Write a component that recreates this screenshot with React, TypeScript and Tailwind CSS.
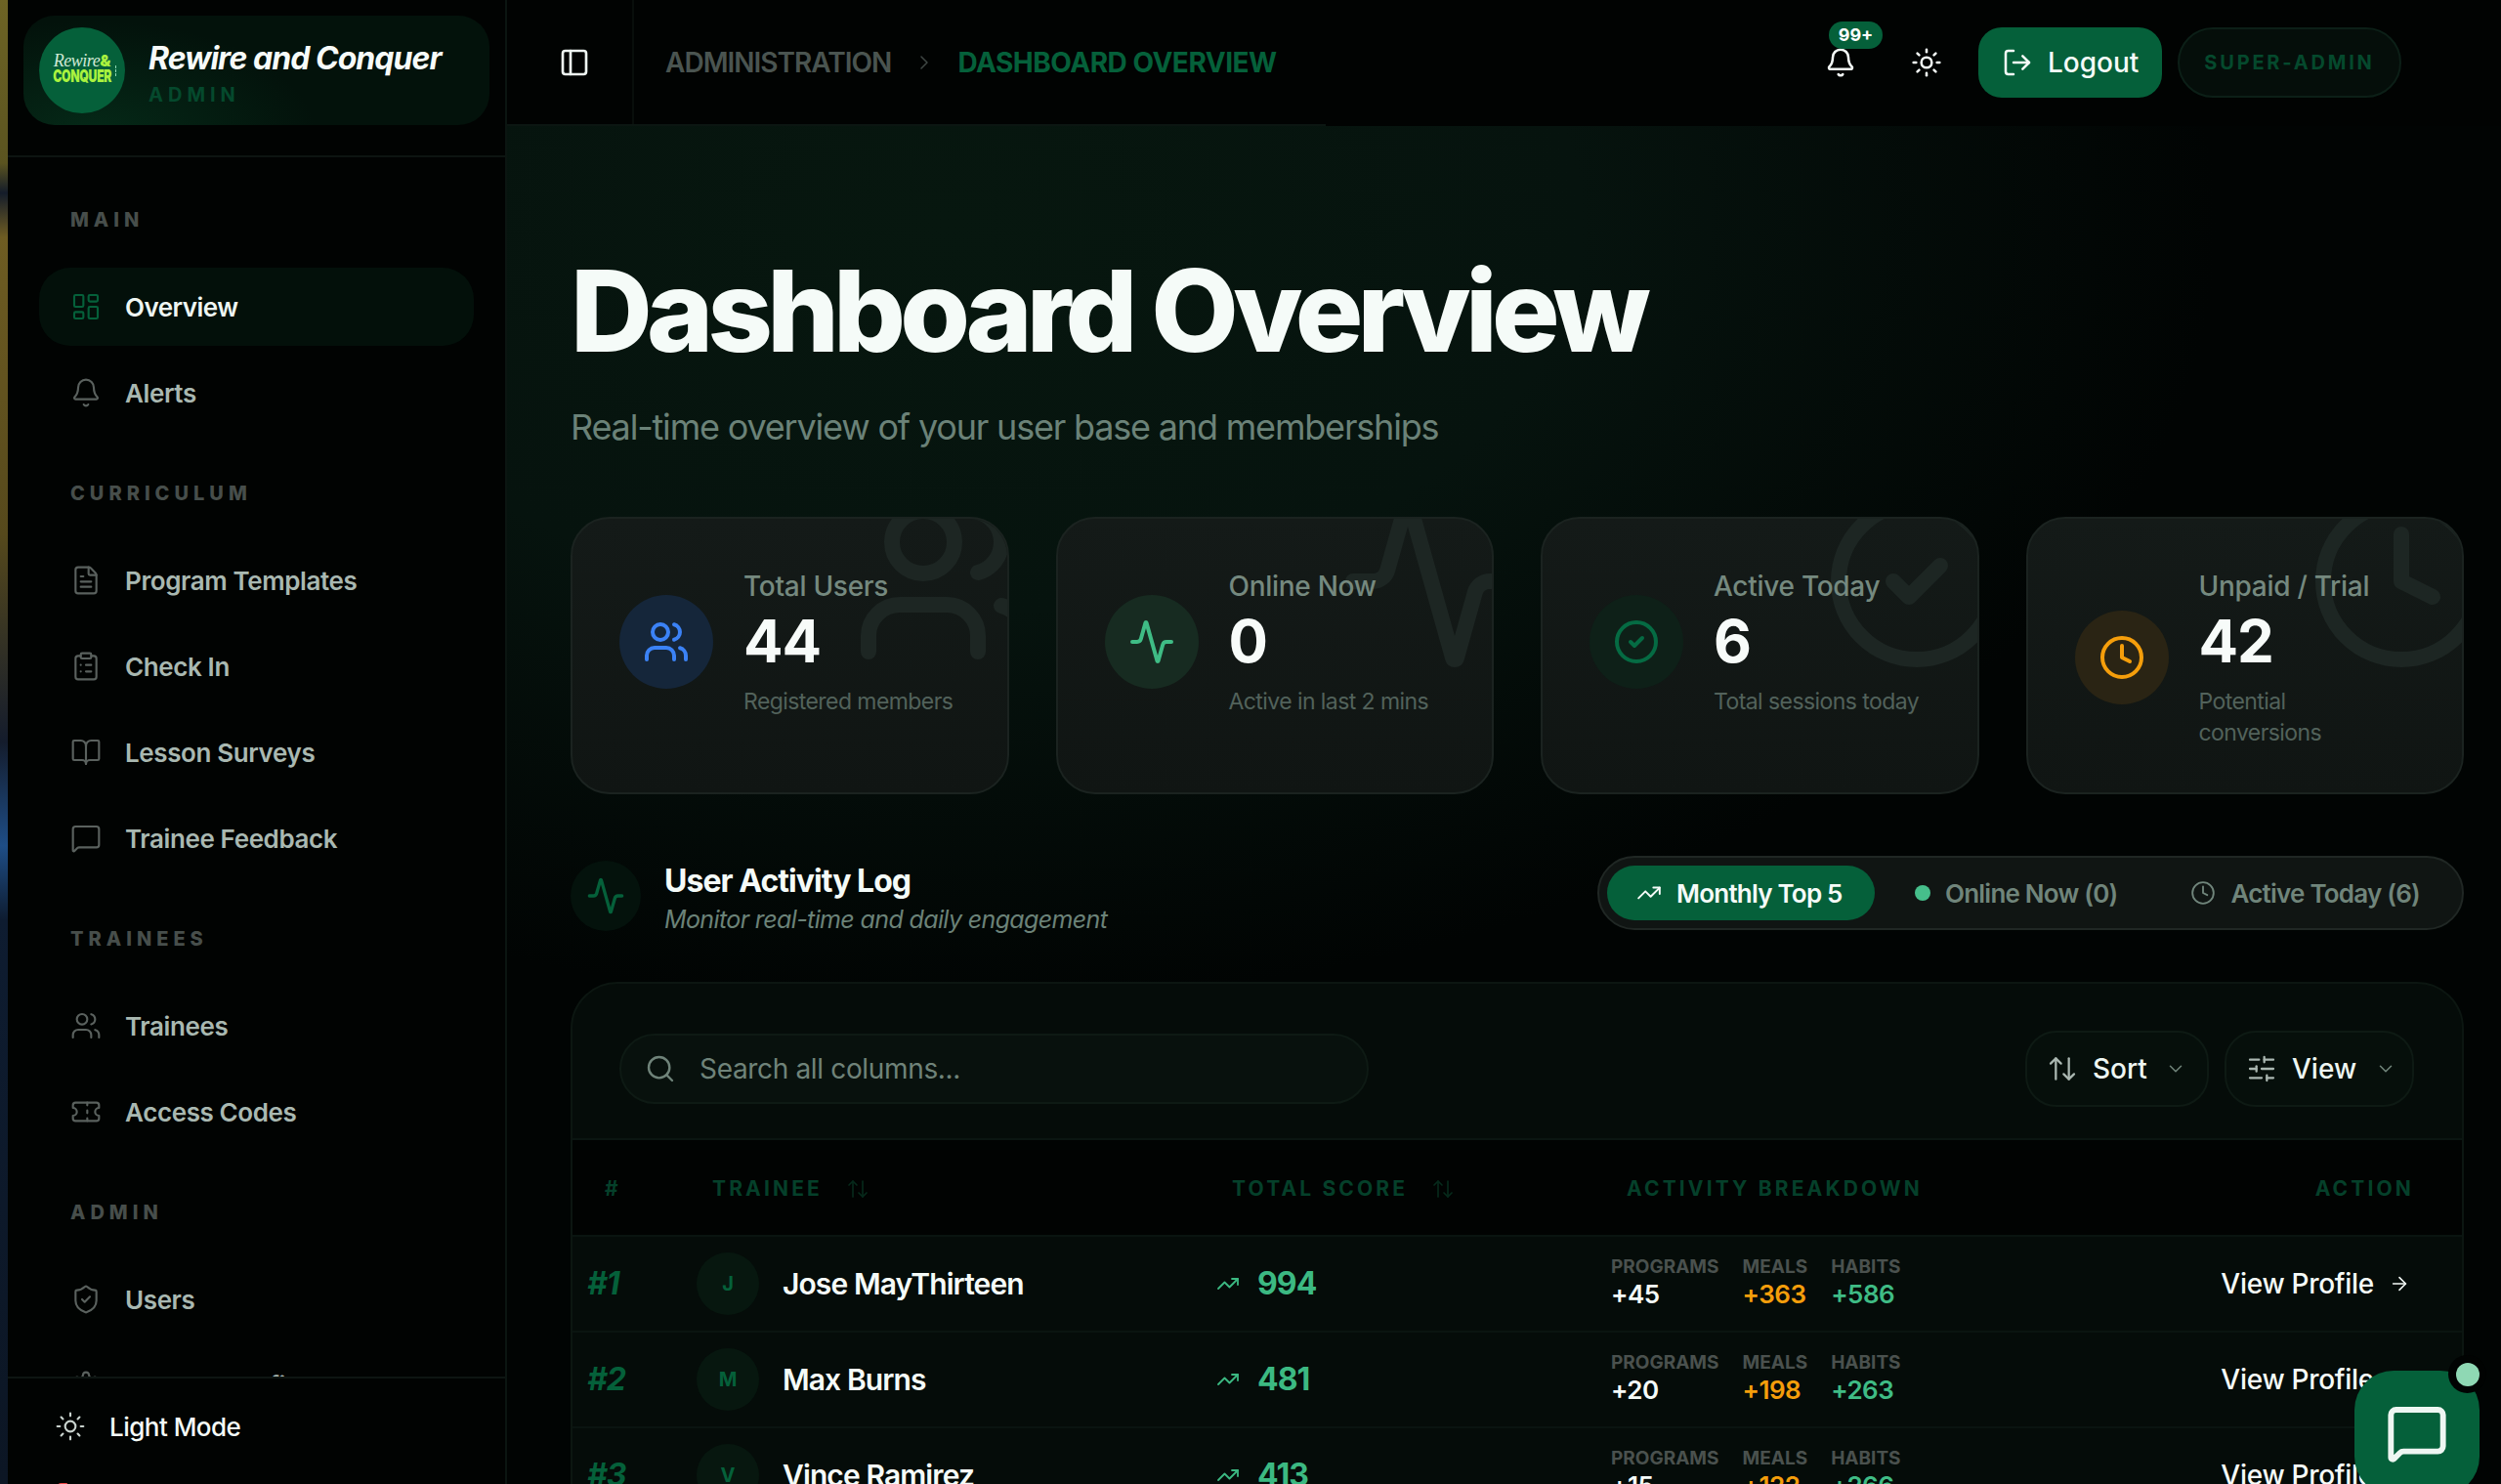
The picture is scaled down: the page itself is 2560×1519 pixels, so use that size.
import React from 'react';
import {
  Activity,
  ArrowRight,
  ArrowUpDown,
  Bell,
  BookOpen,
  ChevronDown,
  ChevronRight,
  CircleCheck,
  ClipboardList,
  Clock,
  FileText,
  LayoutDashboard,
  LogOut,
  MessageSquare,
  PanelLeft,
  Search,
  Settings,
  ShieldCheck,
  SlidersHorizontal,
  Sun,
  Ticket,
  TrendingUp,
  Users,
} from 'lucide-react';

const navSections = [
  {
    title: 'MAIN',
    items: [
      { label: 'Overview', icon: LayoutDashboard, active: true },
      { label: 'Alerts', icon: Bell },
    ],
  },
  {
    title: 'CURRICULUM',
    items: [
      { label: 'Program Templates', icon: FileText },
      { label: 'Check In', icon: ClipboardList },
      { label: 'Lesson Surveys', icon: BookOpen },
      { label: 'Trainee Feedback', icon: MessageSquare },
    ],
  },
  {
    title: 'TRAINEES',
    items: [
      { label: 'Trainees', icon: Users },
      { label: 'Access Codes', icon: Ticket },
    ],
  },
  {
    title: 'ADMIN',
    items: [
      { label: 'Users', icon: ShieldCheck },
      { label: 'System Config', icon: Settings },
    ],
  },
];

const stats = [
  {
    title: 'Total Users',
    value: '44',
    note: 'Registered members',
    icon: Users,
    circle: 'bg-[#15263a]',
    tint: 'text-[#3b82f6]',
  },
  {
    title: 'Online Now',
    value: '0',
    note: 'Active in last 2 mins',
    icon: Activity,
    circle: 'bg-[#172b21]',
    tint: 'text-[#3fbc85]',
  },
  {
    title: 'Active Today',
    value: '6',
    note: 'Total sessions today',
    icon: CircleCheck,
    circle: 'bg-[#0e2018]',
    tint: 'text-[#056b43]',
  },
  {
    title: 'Unpaid / Trial',
    value: '42',
    note: 'Potential conversions',
    icon: Clock,
    circle: 'bg-[#2a2414]',
    tint: 'text-[#f59e0b]',
  },
];

const rows = [
  { rank: '#1', initial: 'J', name: 'Jose MayThirteen', score: '994', programs: '+45', meals: '+363', habits: '+586' },
  { rank: '#2', initial: 'M', name: 'Max Burns', score: '481', programs: '+20', meals: '+198', habits: '+263' },
  { rank: '#3', initial: 'V', name: 'Vince Ramirez', score: '413', programs: '+15', meals: '+122', habits: '+266' },
];

function Sidebar() {
  return (
    <aside className="w-[511px] shrink-0 h-full flex flex-col bg-[#010302] border-r-2 border-[#0b1511]">
      <div className="h-[161px] shrink-0 px-4 pt-4 border-b-2 border-[#0d1411]">
        <div className="h-[112px] rounded-[32px] flex items-center gap-6 pl-4 bg-[radial-gradient(ellipse_230px_120px_at_70px_125px,#052a18_0%,#03120b_100%)]">
          <div className="w-[88px] h-[88px] shrink-0 rounded-full bg-[#05603a] flex flex-col items-center justify-center relative">
            <div className="leading-[14px] text-[18px] flex items-baseline -mt-1">
              <span className="italic font-['Liberation_Serif',serif] text-[#cfe8d5] font-light tracking-tight">Rewire</span>
              <span className="font-['Inter',sans-serif] font-black text-[#a9f23f] text-[16px]">&amp;</span>
            </div>
            <div className="mt-px font-['Inter',sans-serif] font-black text-[#a9f23f] text-[18px] leading-[15px] scale-x-[0.68] tracking-tight">CONQUER</div>
            <div className="absolute right-[9px] top-[39px] h-[11px] w-px border-l border-dashed border-[#8fd8b4]" />
          </div>
          <div className="mt-2">
            <div className="text-[32px] leading-[38px] font-bold italic tracking-[-0.03em] text-[#f7fbf9]">Rewire and Conquer</div>
            <div className="mt-1 text-[20px] leading-[28px] font-bold tracking-[0.25em] text-[#05492d]">ADMIN</div>
          </div>
        </div>
      </div>
      <nav className="flex-1 min-h-0 overflow-hidden px-8 pt-12">
        {navSections.map((section, i) => (
          <div key={section.title} className={i > 0 ? 'mt-[47px]' : ''}>
            <div className="h-8 leading-8 pl-8 mb-[33px] text-[20px] font-extrabold tracking-[0.25em] text-[#474e4b]">{section.title}</div>
            <div className="flex flex-col gap-2">
              {section.items.map((item) => (
                <div
                  key={item.label}
                  className={
                    item.active
                      ? 'h-20 rounded-[32px] flex items-center gap-6 pl-8 bg-[#03100a]'
                      : 'h-20 rounded-[32px] flex items-center gap-6 pl-8'
                  }
                >
                  <item.icon size={32} strokeWidth={1.6} className={item.active ? 'shrink-0 text-[#05603a]' : 'shrink-0 text-[#5a615e]'} />
                  <span className={item.active ? 'text-[26px] font-semibold tracking-[-0.02em] text-[#eef6f2]' : 'text-[26px] font-semibold tracking-[-0.015em] text-[#a9b8b1]'}>{item.label}</span>
                </div>
              ))}
            </div>
          </div>
        ))}
      </nav>
      <div className="h-[110px] shrink-0 border-t-2 border-[#0d1512] pt-[21px] pl-12 flex flex-col gap-[15px]">
        <div className="h-14 shrink-0 flex items-center gap-6">
          <Sun size={32} strokeWidth={1.6} className="text-[#c9d3ce]" />
          <span className="text-[26px] font-medium tracking-[-0.02em] text-[#f5fbf8]">Light Mode</span>
        </div>
        <div className="h-14 shrink-0 flex items-center gap-6">
          <LogOut size={32} strokeWidth={1.6} className="text-[#ef4444]" />
          <span className="text-[26px] font-medium text-[#ef4444]">Sign Out</span>
        </div>
      </div>
    </aside>
  );
}

function Topbar() {
  return (
    <header className="shrink-0 h-[129px] bg-[#010302] flex flex-col">
      <div className="h-[127px] flex items-center">
        <div className="w-[130px] h-full shrink-0 flex items-center justify-center border-r-2 border-[#080e0b] pl-2.5">
          <PanelLeft size={32} strokeWidth={2} className="text-[#eef6f2]" />
        </div>
        <div className="pl-[32px] flex items-center gap-[22px] text-[28px] font-semibold tracking-[-0.035em]">
          <span className="text-[#4a5450]">ADMINISTRATION</span>
          <ChevronRight size={24} strokeWidth={1.5} className="text-[#3f4744]" />
          <span className="font-bold tracking-[-0.017em] text-[#05603a]">DASHBOARD OVERVIEW</span>
        </div>
        <div className="ml-auto flex items-center pr-[102px]">
          <div className="relative w-8 h-8 mr-[56px]">
            <Bell size={32} strokeWidth={1.9} className="text-[#f5fbf8]" />
            <span className="absolute left-[4px] -top-[26px] w-[55px] h-7 rounded-full bg-[#05603a] text-white text-[18px] font-bold leading-7 text-center">99+</span>
          </div>
          <Sun size={32} strokeWidth={1.9} className="text-[#f5fbf8] mr-[37px]" />
          <div className="w-[188px] h-[72px] rounded-3xl bg-[#05603a] flex items-center gap-[15px] pl-6 mr-4">
            <LogOut size={32} strokeWidth={1.9} className="text-[#f5fbf8]" />
            <span className="text-[28px] font-medium text-[#f5fbf8]">Logout</span>
          </div>
          <div className="w-[229px] h-[72px] rounded-full border-2 border-[#0c1f17] bg-[#050e0a] flex items-center justify-center text-[20px] font-bold tracking-[0.14em] text-[#05492d]">
            SUPER-ADMIN
          </div>
        </div>
      </div>
      <div className="h-0.5 w-[838px] bg-[#0c1612]" />
    </header>
  );
}

function StatCard({ stat }: { stat: (typeof stats)[number] }) {
  const Icon = stat.icon;
  return (
    <div className="relative overflow-hidden rounded-[40px] border-2 border-[#1b2320] bg-[linear-gradient(180deg,#141a18,#101513)] px-12 pt-12 pb-[45px]">
      <Icon size={192} strokeWidth={2} className="absolute -top-8 -right-[34px] text-[#1d2623]" />
      <div className="relative flex items-center gap-[31px]">
        <div className={`w-24 h-24 shrink-0 rounded-full flex items-center justify-center ${stat.circle}`}>
          <Icon size={48} strokeWidth={2} className={stat.tint} />
        </div>
        <div>
          <div className="text-[28px] leading-[42px] font-medium tracking-[-0.01em] text-[#75897f]">{stat.title}</div>
          <div className="mt-[5px] text-[60px] leading-[60px] font-bold tracking-[-0.02em] text-[#f7fbf9]">{stat.value}</div>
          <div className="mt-4 max-w-[218px] text-[23px] leading-8 tracking-[-0.025em] text-[#52625b]">{stat.note}</div>
        </div>
      </div>
    </div>
  );
}

function ActivityTabs() {
  return (
    <div className="w-[887px] h-[76px] rounded-full border-2 border-[#202724] bg-[#101513] flex items-center pl-2 text-[26px] font-semibold tracking-[-0.03em]">
      <div className="w-[274px] h-14 rounded-full bg-[#05603a] flex items-center gap-[15px] pl-[30px] text-[#f5fbf8]">
        <TrendingUp size={26} strokeWidth={1.8} />
        <span>Monthly Top 5</span>
      </div>
      <div className="ml-[41px] flex items-center gap-[15px] text-[#70857b]">
        <span className="w-4 h-4 rounded-full bg-[#46bf8b]" />
        <span>Online Now (0)</span>
      </div>
      <div className="ml-[74px] flex items-center gap-[16px] text-[#70857b]">
        <Clock size={26} strokeWidth={1.7} />
        <span>Active Today (6)</span>
      </div>
    </div>
  );
}

function Toolbar() {
  return (
    <div className="flex items-center pl-12 pr-[49px] pt-12 pb-8 border-b-2 border-[#0b1511]">
      <div className="w-[767px] h-[72px] rounded-[36px] border-2 border-[#0e1a14] bg-[#08110d] flex items-center gap-6 pl-[24px]">
        <Search size={32} strokeWidth={1.8} className="text-[#6f8379]" />
        <span className="text-[28px] tracking-[-0.012em] text-[#6f8379]">Search all columns...</span>
      </div>
      <div className="ml-auto flex items-center gap-4">
        <div className="w-[188px] h-[78px] rounded-[32px] border-2 border-[#0e1a14] bg-[#060f0b] flex items-center pl-[20px]">
          <ArrowUpDown size={32} strokeWidth={1.7} className="text-[#aab7b1]" />
          <span className="ml-[15px] text-[28px] font-medium text-[#eef6f2]">Sort</span>
          <ChevronDown size={22} strokeWidth={1.7} className="ml-[18px] text-[#6f8379]" />
        </div>
        <div className="w-[194px] h-[78px] rounded-[32px] border-2 border-[#0e1a14] bg-[#060f0b] flex items-center pl-[20px]">
          <SlidersHorizontal size={32} strokeWidth={1.7} className="text-[#aab7b1]" />
          <span className="ml-[15px] text-[28px] font-medium text-[#eef6f2]">View</span>
          <ChevronDown size={22} strokeWidth={1.7} className="ml-[19px] text-[#6f8379]" />
        </div>
      </div>
    </div>
  );
}

function ActivityTable() {
  const head = 'text-[21px] font-bold tracking-[0.15em] text-[#05402a]';
  return (
    <div>
      <div className={`h-[97px] pt-[3px] grid grid-cols-[127px_532px_404px_1fr_300px] items-center bg-[#010302] ${head}`}>
        <div className="pl-[33px]">#</div>
        <div className="pl-4 flex items-center gap-6">
          <span>TRAINEE</span>
          <ArrowUpDown size={24} strokeWidth={1.7} className="text-[#06291b]" />
        </div>
        <div className="pl-4 flex items-center gap-6">
          <span>TOTAL SCORE</span>
          <ArrowUpDown size={24} strokeWidth={1.7} className="text-[#06291b]" />
        </div>
        <div className="pl-4">ACTIVITY BREAKDOWN</div>
        <div className="text-right pr-[49px]">ACTION</div>
      </div>
      {rows.map((row) => (
        <div key={row.rank} className="h-[98px] grid grid-cols-[127px_532px_404px_1fr_300px] items-center border-t-2 border-[#0a1410]">
          <div className="pl-[15px] text-[32px] font-bold italic tracking-[-0.03em] text-[#05603a]">{row.rank}</div>
          <div className="flex items-center gap-6">
            <div className="w-16 h-16 rounded-full bg-[#07170f] flex items-center justify-center text-[20px] font-bold text-[#05603a]">{row.initial}</div>
            <span className="text-[30px] font-semibold tracking-[-0.03em] text-[#f5fbf8]">{row.name}</span>
          </div>
          <div className="flex items-center gap-[18px]">
            <TrendingUp size={24} strokeWidth={1.8} className="text-[#3cb982]" />
            <span className="text-[32px] font-bold tracking-[-0.03em] text-[#3cb982]">{row.score}</span>
          </div>
          <div className="flex gap-6 -mt-0.5">
            <Breakdown label="PROGRAMS" value={row.programs} tint="text-[#f5fbf8]" />
            <Breakdown label="MEALS" value={row.meals} tint="text-[#f59e0b]" />
            <Breakdown label="HABITS" value={row.habits} tint="text-[#3fbc85]" />
          </div>
          <div className="flex items-center justify-end gap-[15px] pr-[53px] text-[28px] font-medium tracking-[-0.01em] text-[#f5fbf8] whitespace-nowrap">
            <span>View Profile</span>
            <ArrowRight size={22} strokeWidth={1.7} className="shrink-0" />
          </div>
        </div>
      ))}
    </div>
  );
}

function Breakdown({ label, value, tint }: { label: string; value: string; tint: string }) {
  return (
    <div>
      <div className="text-[19px] leading-6 font-bold text-[#4a514e]">{label}</div>
      <div className={`text-[26px] leading-8 font-semibold tracking-[-0.02em] ${tint}`}>{value}</div>
    </div>
  );
}

export default function App() {
  return (
    <div className="relative w-screen h-screen overflow-hidden flex bg-black font-['Inter',sans-serif]">
      {/* desktop wallpaper showing behind the window */}
      <div className="w-2 shrink-0 h-full bg-[linear-gradient(180deg,#6d6324_0%,#5b5420_11%,#141c2a_13%,#6e5c22_16%,#56491c_36%,#141c2c_50%,#1e4d86_57%,#0e1c30_62%,#0c1624_100%)]" />
      <Sidebar />
      <main className="flex-1 min-w-0 h-full flex flex-col">
        <Topbar />
        <div className="flex-1 min-h-0 overflow-hidden pl-[65px] pr-[38px] pt-[131px] bg-[radial-gradient(ellipse_1300px_800px_at_450px_100px,#07170f_0%,#06130e_50%,#010403_100%)]">
          <h1 className="text-[116px] leading-[116px] font-extrabold tracking-[-0.05em] text-[#f5fbf8]">Dashboard Overview</h1>
          <p className="mt-[37px] text-[36px] leading-[48px] tracking-[-0.033em] text-[#6b8278]">Real-time overview of your user base and memberships</p>
          <div className="mt-[68px] grid grid-cols-4 gap-12">
            {stats.map((stat) => (
              <StatCard key={stat.title} stat={stat} />
            ))}
          </div>
          <div className="mt-[63px] flex items-start justify-between">
            <div className="mt-[5px] flex items-start gap-6">
              <div className="w-[72px] h-[72px] rounded-full bg-[#04120c] flex items-center justify-center">
                <Activity size={40} strokeWidth={2} className="text-[#05603a]" />
              </div>
              <div className="mt-px">
                <div className="text-[32px] leading-10 font-bold tracking-[-0.03em] text-[#f5fbf8]">User Activity Log</div>
                <div className="text-[25px] leading-[38px] italic tracking-[-0.025em] text-[#6b8278]">Monitor real-time and daily engagement</div>
              </div>
            </div>
            <ActivityTabs />
          </div>
          <div className="mt-[45px] rounded-t-[48px] border-2 border-[#0c1611] bg-[#050c09] overflow-hidden">
            <Toolbar />
            <ActivityTable />
          </div>
        </div>
      </main>
      {/* floating chat button */}
      <div className="absolute left-[2410px] top-[1403px] w-[128px] h-[128px] rounded-[40px] bg-[#05603a] flex items-center justify-center">
        <MessageSquare size={64} strokeWidth={2.2} className="text-[#eef6f2]" />
        <span className="absolute -top-4 -right-[7px] w-[39px] h-[39px] rounded-full bg-[#010302] flex items-center justify-center">
          <span className="w-6 h-6 rounded-full bg-[#8fd8b4]" />
        </span>
      </div>
    </div>
  );
}
